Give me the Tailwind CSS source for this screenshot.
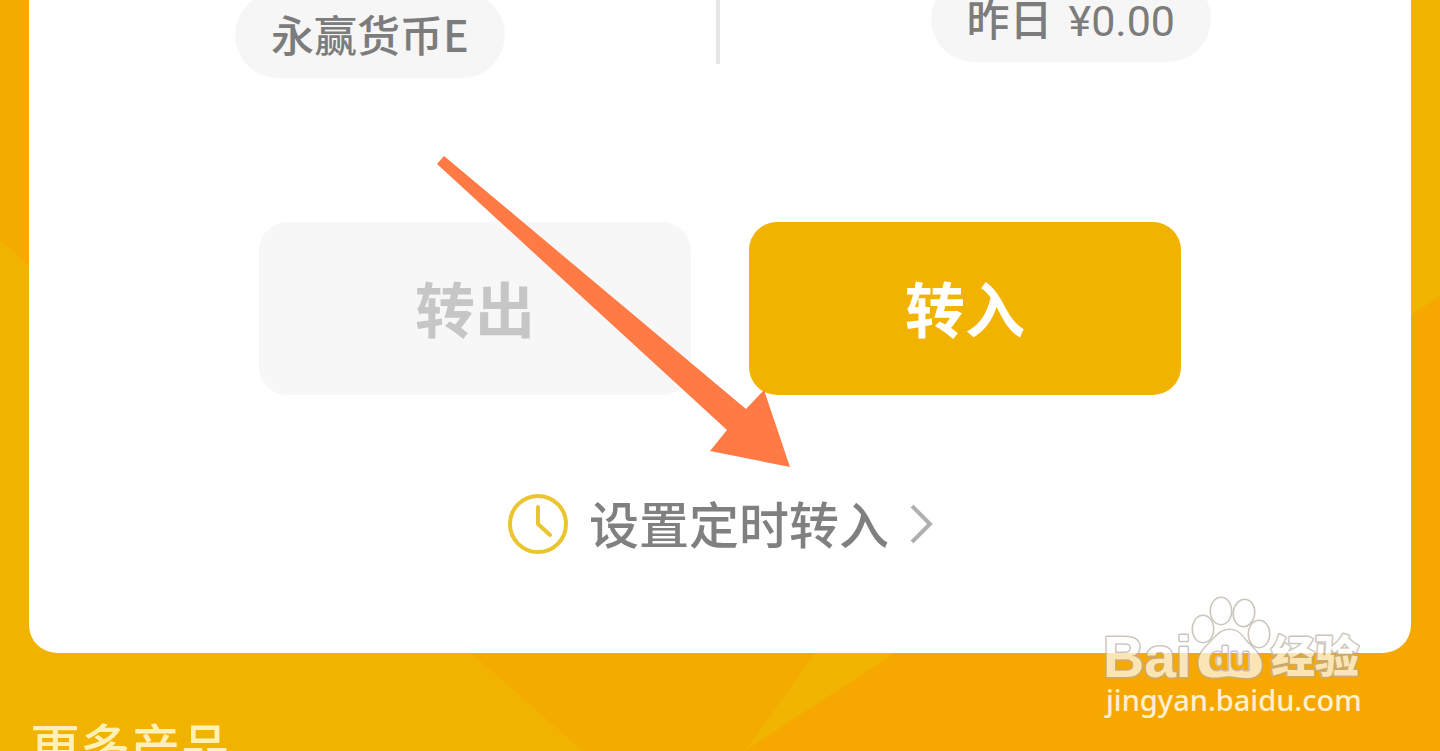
<!DOCTYPE html>
<html lang="zh-CN">

<head>
    <meta charset="UTF-8">
    <meta name="viewport" content="width=device-width, initial-scale=1.0">
    <title>转入转出</title>
    <script src="https://cdn.jsdelivr.net/npm/@tailwindcss/browser@4"></script>
</head>

<body class="relative h-screen overflow-hidden bg-[#f3ab00] font-['Noto_Sans_CJK_SC',sans-serif]">

    <!-- Backdrop facets -->
    <svg class="absolute inset-0 -z-10 h-full w-full" viewBox="0 0 1440 751" preserveAspectRatio="none" aria-hidden="true">
        <path d="M0 240L583 751H0z" fill="#f2b200" />
        <path d="M745 751L1283 0H1440V296z" fill="#f1b400" />
        <path d="M745 751L1440 296V751z" fill="#f7a800" />
    </svg>

    <!-- Account card -->
    <main class="mx-[29px] flow-root rounded-b-[28px] bg-white pb-24">
        <div class="flex h-20 items-start justify-between pr-[200px] pl-[206px]">
            <div class="-mt-2 h-[86px] rounded-full bg-[#f6f6f6] px-9 pt-2 text-[43px] leading-[66px] font-medium text-[#7c7c7c]">永赢货币E</div>
            <div class="h-16 w-1 bg-[#e5e5e5]"></div>
            <div class="-mt-6 h-[86px] rounded-full bg-[#f6f6f6] px-9 pt-2 text-[43px] leading-[66px] font-medium text-[#7c7c7c]">
                昨日<span class="ml-4 font-[Roboto,sans-serif] font-normal">¥0.00</span>
            </div>
        </div>

        <div class="mt-[142px] flex justify-center gap-[58px]">
            <button type="button" class="h-[173px] w-[432px] rounded-[28px] bg-[#f7f7f7] pb-1 text-[60px] font-bold text-[#c6c6c6]">转出</button>
            <button type="button" class="h-[173px] w-[432px] rounded-[28px] bg-[#f2b200] pb-1 text-[60px] font-bold text-white">转入</button>
        </div>

        <a href="#" class="mx-auto mt-24 flex h-[66px] w-fit items-center text-[50px] leading-[62px] font-medium text-[#808080]">
            <svg class="mr-5 size-[62px]" viewBox="0 0 62 62" fill="none" stroke="#ebc52f" stroke-width="4" aria-hidden="true">
                <circle cx="31" cy="31" r="28" />
                <path d="M31 14V31L43 42" stroke-linecap="round" stroke-linejoin="round" />
            </svg>
            <span class="pb-1">设置定时转入</span>
            <svg class="ml-5 h-10 w-6" viewBox="0 0 24 40" fill="none" stroke="#b0b0b0" stroke-width="4" aria-hidden="true">
                <path d="M3 2L21 20L3 38" />
            </svg>
        </a>
    </main>

    <h2 class="mt-[61px] ml-[30px] text-[50px] leading-[60px] font-medium text-[#fff0b8]">更多产品</h2>

    <!-- Pointer arrow -->
    <svg class="absolute top-[155px] left-1/2 ml-[-284px] h-[313px] w-[355px]" viewBox="0 0 355 313" aria-hidden="true">
        <path d="M8 1L310 254L328 235L354 312L274 296L291 275L1 9z" fill="#ff7a45" />
    </svg>

    <!-- Watermark -->
    <svg class="absolute right-[70px] bottom-[25px] h-[135px] w-[270px]" viewBox="0 0 270 135" role="img" aria-label="Baidu 经验">
        <defs>
            <linearGradient id="mark" gradientUnits="userSpaceOnUse" x1="0" y1="0" x2="0" y2="124">
                <stop offset=".5" stop-color="#fefefe" />
                <stop offset=".5" stop-color="#fce5b5" />
            </linearGradient>
            <linearGradient id="cutout" gradientUnits="userSpaceOnUse" x1="0" y1="0" x2="0" y2="124">
                <stop offset=".5" stop-color="#fff" />
                <stop offset=".5" stop-color="#f5a90a" />
            </linearGradient>
        </defs>
        <g fill="url(#mark)" stroke="#b5aca0" stroke-opacity=".7" stroke-width="3" stroke-linejoin="round" paint-order="stroke">
            <ellipse cx="103" cy="38" rx="10" ry="13" />
            <ellipse cx="121" cy="20" rx="10" ry="13" />
            <ellipse cx="144" cy="22" rx="10" ry="13" transform="rotate(8 144 22)" />
            <ellipse cx="159" cy="43" rx="10" ry="13" />
            <path d="M130 39C120 39 115 47 110 52C103 59 97 64 99 76C102 88 113 87 121 86C131 84 134 86 145 87C158 88 164 80 161 69C157 59 150 55 145 49C141 43 137 39 130 39z" />
            <text x="3" y="86" class="font-['Liberation_Sans',sans-serif] text-[57px] font-bold">Bai</text>
            <text x="171" y="82" class="font-['Noto_Sans_CJK_SC',sans-serif] text-[44px] font-black">经验</text>
            <text x="109" y="79" fill="url(#cutout)" class="font-['Liberation_Sans',sans-serif] text-[34px] font-bold">du</text>
        </g>
        <text x="6" y="120" fill="#fff0cf" class="font-['Noto_Sans',sans-serif] text-[29px] font-medium">jingyan.baidu.com</text>
    </svg>

</body>

</html>
